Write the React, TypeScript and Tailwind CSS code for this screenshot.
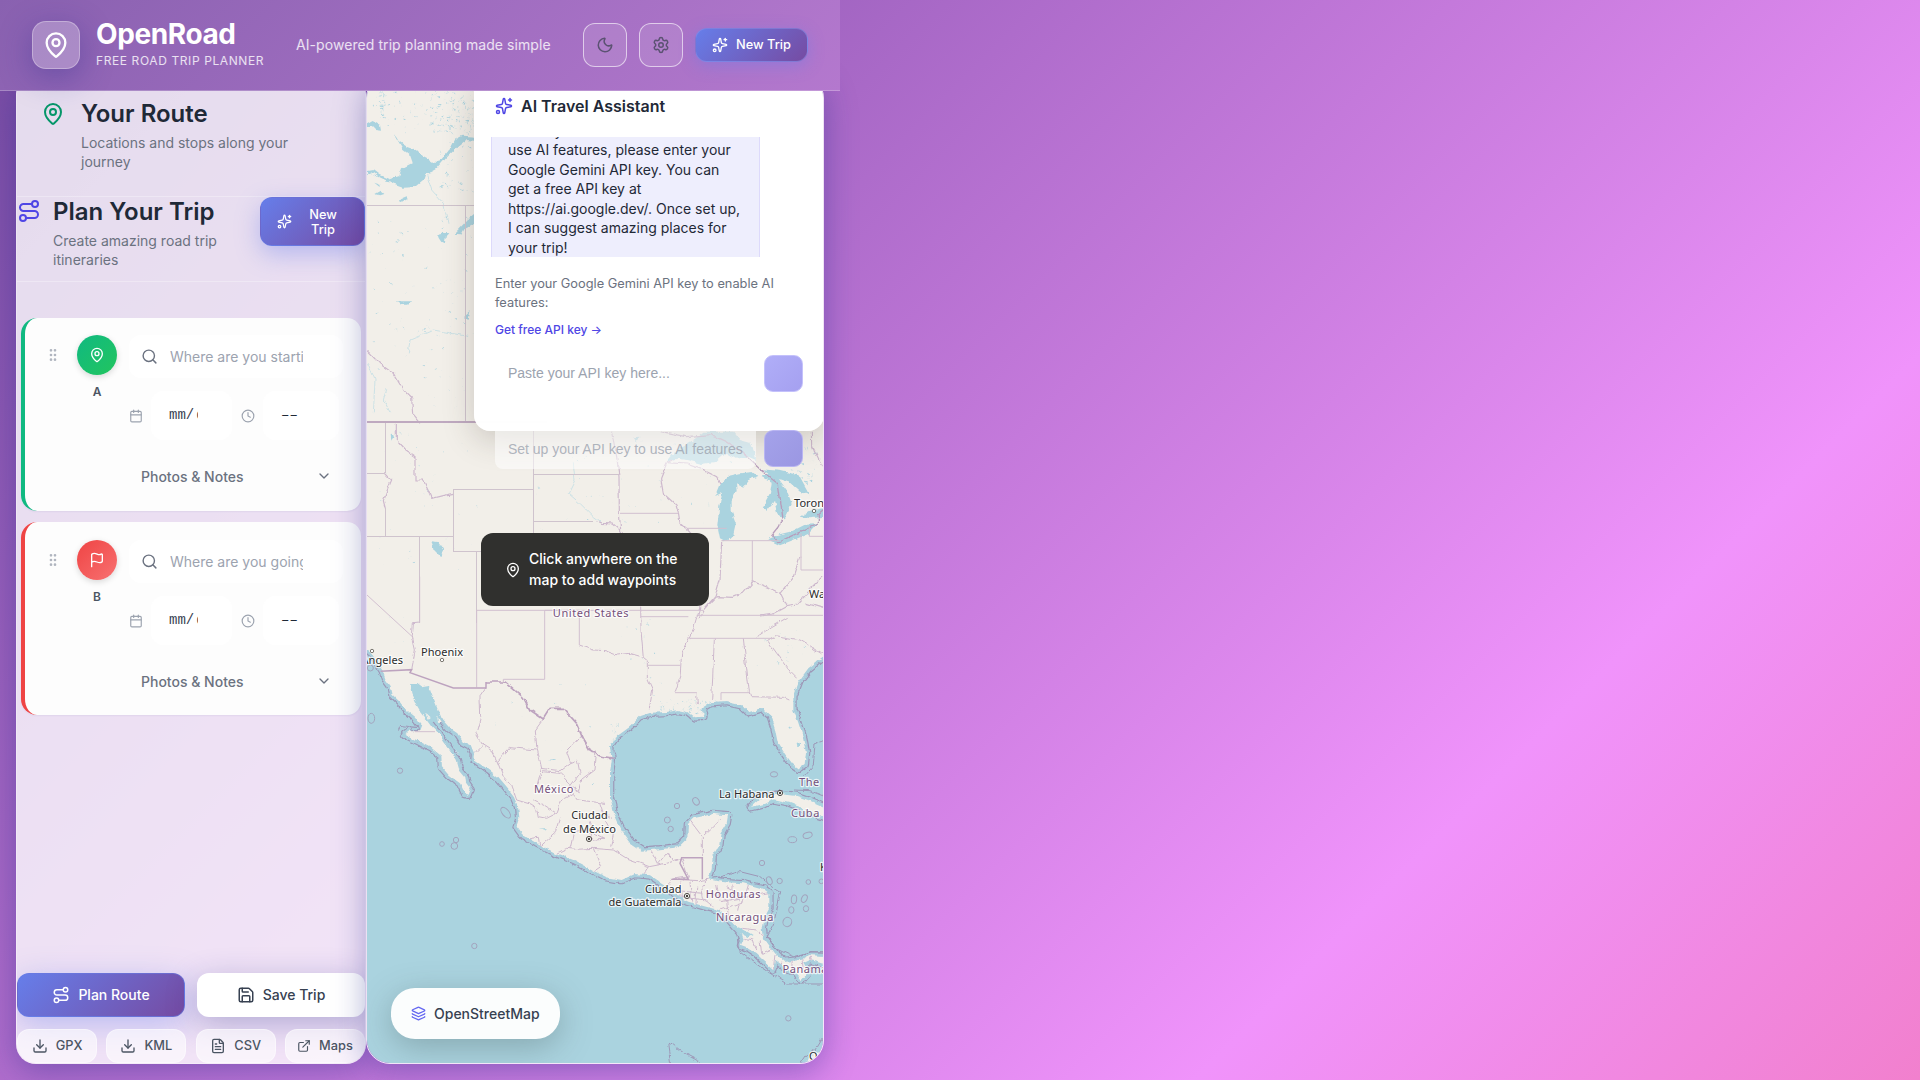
import React from "react";
import {
  Calendar,
  ChevronDown,
  Clock,
  Download,
  ExternalLink,
  FileText,
  Flag,
  GripVertical,
  Layers,
  MapPin,
  Moon,
  Route,
  Save,
  Search,
  Settings,
  Sparkles,
} from "lucide-react";

const LAND =
  "M21,-1700 L21,150 L38,165 L50,185 L68,212 L76,236 L92,258 L98,285 L122,308 L140,332 L164,352 L184,378 L178,394 L150,392 L135,403 L165,418 L212,442 L244,468 L246,502 L266,525 L300,550 L316,582 L326,584 L332,568 L318,548 L316,532 L298,510 L290,482 L270,450 L252,425 L236,400 L218,382 L200,358 L182,335 L168,312 L154,282 L150,252 L172,252 L185,262 L207,258 L217,285 L235,330 L246,358 L270,385 L292,400 L308,425 L332,438 L342,462 L340,478 L358,490 L388,512 L416,535 L444,568 L462,592 L474,620 L478,655 L470,680 L488,705 L530,730 L585,758 L640,780 L700,812 L740,832 L785,840 L825,822 L870,826 L915,855 L946,885 L985,905 L1030,918 L1075,930 L1108,958 L1140,995 L1150,1022 L1143,1038 L1165,1046 L1190,1062 L1215,1085 L1240,1108 L1245,1082 L1270,1100 L1310,1118 L1325,1140 L1345,1118 L1330,1090 L1350,1080 L1372,1085 L1395,1092 V1068 L1350,1066 L1320,1080 L1275,1086 L1245,1060 L1212,1015 L1208,985 L1215,950 L1228,925 L1228,880 L1210,866 L1150,850 L1085,846 L1045,838 L1055,805 L1058,768 L1078,735 L1082,700 L1100,670 L1104,646 L1060,642 L1000,655 L984,672 L982,715 L955,742 L900,748 L848,752 L812,728 L785,690 L762,640 L750,592 L750,520 L755,480 L750,440 L772,408 L810,380 L842,348 L872,338 L920,336 L955,330 L985,336 L1005,352 L1030,350 L1025,325 L1048,310 L1100,306 L1145,316 L1165,336 L1205,324 L1232,348 L1244,385 L1252,425 L1275,462 L1298,492 L1318,506 L1334,495 L1338,460 L1330,415 L1314,365 L1300,330 L1300,285 L1315,245 L1345,205 L1395,165 V-1700 Z";

const CUBA =
  "M1172,622 L1205,592 L1262,582 L1310,588 L1350,602 L1395,622 V652 L1362,640 L1322,622 L1288,608 L1240,598 L1212,612 Z";

const MINOR = [
  "M155,209 L166,150 L157,110 L160,68 L179,66",
  "M378,264 L360,290 L362,350 L348,400 L368,435 L340,462",
  "M550,357 L526,390 L530,440 L545,505 L600,512 L632,488",
  "M368,435 L395,452 L412,485 L450,443 L530,450",
  "M412,485 L430,530 L456,560 L470,600",
  "M665,405 L620,455 L632,488 L652,480 L660,520 L630,560 L655,575 L665,540 L705,510 L708,475 L665,405",
  "M545,505 L530,560 L550,515 L600,520 L632,555",
  "M470,600 L510,612 L530,625 L535,650 L560,655 L590,640 L555,618 L520,600",
  "M590,640 L605,600 L640,580 L655,600 L735,610",
  "M480,720 L535,712 L540,740 L585,700 L600,650",
  "M585,762 L620,745 L650,748 L700,745 L722,800 L700,815",
  "M630,745 L640,700 L680,690 L700,720 L735,718 L700,700 L690,660",
  "M700,745 L760,750 L800,775 L868,800 L850,828",
  "M756,655 L730,640 L720,610",
  "M735,660 L760,705 L752,740",
  "M875,752 L895,790 L920,760 L940,782 L965,776",
  "M965,776 L985,830 L935,838 L920,865",
  "M985,655 L1027,710 V770 M1027,710 L1085,655",
  "M868,800 L920,790 L965,776",
  "M935,838 L1020,842 L1045,838 L1025,860 L1030,895 L1060,920",
  "M960,845 L965,905 M990,845 L995,905 M935,870 L1030,880 M1010,860 L1008,915 M950,890 L1040,900",
  "M1070,855 L1080,905 M1120,852 L1115,900 M1165,855 L1150,905 L1080,930 M1080,905 L1230,878",
  "M1100,860 L1140,880 L1130,935 M1050,880 L1100,900 L1105,950",
  "M1150,985 L1190,990 L1215,1012 M1150,1015 L1180,1020 L1190,1050 M1200,1020 L1205,1060 L1240,1045",
  "M1245,1062 L1240,1108 M1265,1088 L1262,1115 M1300,1070 L1298,1118 M1325,1075 L1330,1110 M1350,1070 L1362,1100",
  "M658,135 L700,150 L735,152 L770,165 L810,160 L850,172",
  "M842,20 L843,90 L850,172 L862,182 L862,235 L878,270 L868,325",
  "M1040,-20 L1020,20 L1000,90 L965,160 L960,230 L945,275",
  "M1225,125 L1265,180 L1290,215 L1310,235 M1225,125 L1250,108 L1320,120 L1386,162",
  "M1190,112 L1235,80 L1283,52",
  "M1010,278 L1012,312 M1063,115 L1055,300 M1150,115 L1168,275 L1172,290 L1270,292 L1288,300",
  "M1310,600 L1318,618 M1340,600 L1342,630 M1365,612 L1372,640 M1290,590 L1288,608",
];

const NORTH = [
  "M109,1030 V1080 L135,1110 L165,1130 L165,1200 L190,1200 L215,1255 L250,1246 L280,1240",
  "M21,812 L60,852 L100,880 L130,930 L155,955 L158,1000 L180,1027",
  "M76,1180 L95,1200 L80,1235 L70,1262 L76,1285",
];

const MIDWEST = [
  "M575,515 L590,590 L597,650 L598,760 L602,810",
  "M530,784 L545,790 L580,792 L602,812 L615,830",
  "M775,760 L768,735 L730,700 L722,655 L740,610 L760,600",
  "M775,760 L780,790 L805,812 L850,860",
  "M740,608 L800,612 L845,628 L890,650 L900,670",
  "M905,842 L900,960 L885,1010 L850,1050 L835,1080",
  "M865,1035 L890,1010 L940,1012 L970,1000 L1000,965 L1050,985 L1080,1000 L1120,950 L1140,890",
  "M1080,1000 L1100,1040 L1130,1035 L1170,990 L1210,950",
  "M1100,1040 L1060,1062 L1020,1068 M1160,1030 L1210,1045",
  "M1177,515 L1178,560 L1210,625",
];

const LAKES = [
  "M740,606 L770,570 L820,540 L850,515 L940,515 L960,540 L990,548 L1005,580 L1008,600 L985,590 L950,596 L920,578 L890,605 L845,612 L800,600 L770,596 Z",
  "M886,705 L900,670 L925,648 L960,640 L1000,636 L1015,648 L985,660 L970,680 L948,670 L950,690 L935,720 L935,755 L948,790 L940,825 L920,845 L900,835 L892,795 L898,740 L906,695 Z",
  "M1020,650 L1050,640 L1075,655 L1100,690 L1115,730 L1095,775 L1075,770 L1062,722 L1040,752 L1025,745 L1050,700 L1055,668 Z",
  "M1025,628 L1080,632 L1135,645 L1160,690 L1168,706 L1140,695 L1110,668 L1060,652 Z",
  "M1042,838 L1070,825 L1110,815 L1150,795 L1195,792 L1170,820 L1120,840 L1080,856 Z",
  "M1142,770 L1170,752 L1212,745 V770 L1170,775 Z",
  "M36,846 L52,852 L70,880 L62,890 L40,868 Z",
  "M640,532 L662,530 L650,546 Z",
];

const CANADA = [
  "M82,128 L92,140 L100,155 L125,172 L150,180 L165,195 L185,205 L200,215 L220,215 L250,180 L265,150 L290,137 L324,140 V152 L300,150 L275,170 L240,205 L210,240 L192,250 L178,252 L172,270 L150,288 L110,290 L80,280 L70,268 L100,258 L108,235 L140,218 L132,195 L112,180 Z",
  "M3,100 L20,90 L45,105 L48,122 L30,120 L18,108 L3,108 Z",
  "M3,243 L20,240 L40,255 L75,270 L80,275 L60,272 L35,260 L20,248 L3,255 Z",
  "M25,278 L45,285 L40,290 Z M25,312 L42,302 L52,312 L40,316 Z M97,332 L122,322 L125,328 L108,338 Z",
  "M324,372 L305,388 L290,405 L262,434 L285,436 L295,418 L324,402 Z",
  "M214,432 L228,428 L250,430 L240,440 L236,458 L226,456 L218,444 Z",
];

const ISLANDS: [number, number, number, number, number][] = [
  [34, 355, 10, 15, 0],
  [120, 512, 8, 8, 0],
  [246, 732, 7, 7, 0],
  [288, 720, 8, 8, 0],
  [283, 738, 10, 10, 0],
  [437, 638, 10, 19, -40],
  [343, 1038, 8, 8, 0],
  [951, 618, 8, 8, 0],
  [1008, 604, 9, 12, -30],
  [922, 660, 9, 9, 0],
  [932, 687, 8, 8, 0],
  [1206, 789, 8, 8, 0],
  [1297, 719, 13, 9, 0],
  [1343, 706, 14, 9, -15],
  [1242, 523, 11, 8, 0],
  [1302, 898, 8, 13, 5],
  [1333, 896, 8, 12, 25],
  [1294, 930, 8, 10, 0],
  [1338, 926, 8, 9, 0],
  [1282, 966, 13, 14, 20],
  [1259, 843, 8, 8, 0],
  [1345, 846, 7, 7, 0],
  [1384, 844, 7, 7, 0],
  [1285, 1255, 8, 8, 0],
  [1228, 842, 8, 12, -20],
  [31, 204, 9, 9, 0],
];

function specks(count: number, seed: number, x: number, y: number, w: number, h: number, size: number) {
  let s = seed;
  const rnd = () => {
    s = (s * 16807) % 2147483647;
    return s / 2147483647;
  };
  rnd();
  rnd();
  let d = "";
  for (let i = 0; i < count; i++) {
    const px = x + rnd() * w;
    const py = y + rnd() * h;
    const a = (rnd() - 0.3) * size;
    const b = (rnd() - 0.6) * size;
    d += `M${px.toFixed(1)},${py.toFixed(1)}l${a.toFixed(1)},${b.toFixed(1)}l${(b / 2).toFixed(1)},${(a / 2 + 1).toFixed(1)}z`;
  }
  return d;
}

function Label({ x, y, children, country, anchor = "middle" }: { x: number; y: number; children: string; country?: boolean; anchor?: "start" | "middle" | "end" }) {
  return (
    <text
      x={x}
      y={y}
      textAnchor={anchor}
      fontSize="11"
      letterSpacing={country ? 0.55 : 0.05}
      fill={country ? "#75507b" : "#2b2b2b"}
      stroke="#ffffff"
      strokeOpacity="0.75"
      strokeWidth="2.4"
      strokeLinejoin="round"
      paintOrder="stroke"
    >
      {children}
    </text>
  );
}

function Capital({ x, y }: { x: number; y: number }) {
  return (
    <g>
      <circle cx={x} cy={y} r="2.6" fill="#fff" stroke="#3f3b36" strokeWidth="0.9" />
      <circle cx={x} cy={y} r="1.2" fill="#3f3b36" />
    </g>
  );
}

function MapCanvas() {
  return (
    <svg viewBox="367 75 456 988" className="block h-full w-full font-['Noto_Sans',sans-serif]" preserveAspectRatio="none">
      <defs>
        <filter id="rough" x="-5%" y="-5%" width="110%" height="110%">
          <feTurbulence type="fractalNoise" baseFrequency="0.12" numOctaves="3" seed="4" />
          <feDisplacementMap in="SourceGraphic" scale="5" xChannelSelector="R" yChannelSelector="G" />
        </filter>
        <clipPath id="landclip">
          <path d={LAND} />
        </clipPath>
      </defs>
      <rect x="367" y="75" width="456" height="988" fill="#aad3df" />
      <g filter="url(#rough)">
        <g transform="translate(360 600) scale(0.33333)" strokeLinejoin="round">
          <path d={LAND} fill="none" stroke="#9d97b7" strokeWidth="26" />
          <path d={CUBA} fill="none" stroke="#9d97b7" strokeWidth="26" />
          <path d={LAND} fill="none" stroke="#a9cfdd" strokeWidth="19" />
          <path d={CUBA} fill="none" stroke="#aad3df" strokeWidth="19" />
          <path d="M150,252 L172,252 L185,262 L207,258 L217,285 L235,330 L240,360 L205,370 L182,335 L168,312 L154,282 Z" fill="#aad3df" />
          <path d={LAND} fill="#f2efe9" />
          <path d="M-60,-1700 H60 V140 H-60 Z M1380,-1700 H1460 V150 H1380 Z" fill="#f2efe9" />
          <path d={CUBA} fill="#f2efe9" />
          <path d="M115,392 L122,376 L150,380 L158,392 L176,392 L172,380" fill="none" stroke="#9d97b7" strokeWidth="3" />
          <path d="M232,350 L240,362 L234,372 Z M198,338 L212,352 L206,356 Z M290,455 L284,440 L298,470 Z" fill="#f2efe9" />
          <g fill="none" stroke="#cdb8cd" strokeWidth="3" clipPath="url(#landclip)">
            {MINOR.map((d) => (
              <path key={d} d={d} />
            ))}
          </g>
          <path d="M378,246 H435 L490,292 L510,330 L550,357 L570,325 L610,325 L650,370 L670,415 L690,450 L720,468 L762,475" fill="none" stroke="#bda3bf" strokeWidth="5" />
          <path d="M1060,835 L1140,815 L1200,830 L1240,862 L1262,875 L1240,975 L1222,1010 L1245,1045 L1300,1070 L1350,1056 L1395,1055 M1132,1010 L1135,1050 L1200,1100 L1280,1152 H1395" fill="none" stroke="#9d97b7" strokeWidth="3" />
          <path d="M1395,420 L1365,432 L1360,495 L1330,530 M1300,570 L1350,572 L1395,590 M932,1395 L924,1340 L930,1327 L975,1362 L1010,1380 L1020,1395 M1395,1300 L1365,1350 L1340,1365 L1320,1395" fill="none" stroke="#9d97b7" strokeWidth="3" />
          <path d="M1395,1330 L1380,1355 L1350,1365 L1338,1395 H1395 Z" fill="#f2efe9" />
          <path d="M1120,975 L1145,985 L1178,1005 L1165,1012 L1140,1000 Z M1310,432 l10,-4 l0,12 l-8,2 z M540,686 l24,-2 l-6,5 z M560,477 l30,0 l-8,3 z M1285,375 l8,5 l-4,4z M700,545 l2,10 l-3,0z" fill="#aad3df" />
          <path d={specks(70, 9177, 900, 300, 170, 40, 14)} fill="#aad3df" />
          <path d={specks(30, 3155, 750, 370, 20, 90, 12)} fill="#aad3df" />
          <path d={specks(22, 77123, 780, 60, 120, 240, 10)} fill="#aad3df" />
          <path d={specks(24, 17231, 1180, 90, 160, 120, 8)} fill="#aad3df" />
          <path d={specks(10, 27453, 400, 250, 300, 200, 10)} fill="#aad3df" />
          <path d={specks(10, 55342, 40, 20, 90, 180, 8)} fill="#aad3df" />
        </g>
        <g transform="translate(360 80) scale(0.33333)" fill="none" stroke="#cdb8cd" strokeWidth="3.5">
          {NORTH.map((d) => (
            <path key={d} d={d} />
          ))}
          <path d="M25,850 L45,900 L40,1000 M80,925 L70,960 L90,1000 M200,285 L215,330 L250,370 L268,430 M145,820 L150,780 L220,750 L330,770 M640,1150 L645,1200 L625,1240 L660,1270 L700,1310 L720,1325" stroke="#c4dfe4" strokeWidth="2.5" />
          <path d={specks(80, 12345, 30, 400, 310, 500, 12)} fill="#aad3df" stroke="none" />
          <path d={specks(40, 42311, 30, 1050, 320, 420, 8)} fill="#aad3df" stroke="none" />
          <path d="M108,664 h45 l-8,10 h-25z M308,715 l24,-22 l-6,26z M214,1384 l20,2 l16,24 l-8,12 l-20,-14z M92,1060 l10,8 l-8,14z" fill="#aad3df" stroke="none" />
        </g>
        <g transform="translate(366 90) scale(0.33333)" fill="#aad3df">
          {CANADA.map((d) => (
            <path key={d} d={d} />
          ))}
          <path d={specks(150, 71311, 190, -40, 134, 170, 16)} />
          <path d={specks(60, 31339, 20, -40, 170, 170, 12)} />
          <path d={specks(36, 81355, 220, 150, 104, 160, 14)} />
          <path d={specks(34, 80321, 40, 2, 14, 90, 14)} />
        </g>
        <g transform="translate(420 260) scale(0.33333)">
          {LAKES.map((d) => (
            <path key={d} d={d} fill="#aad3df" />
          ))}
          <path d={specks(50, 61143, 340, 530, 600, 300, 9)} fill="#aad3df" />
          <path d={specks(30, 99231, 1090, 560, 118, 110, 16)} fill="#aad3df" />
          <path d={specks(30, 44567, 0, 40, 160, 420, 10)} fill="#aad3df" />
          <g fill="none" stroke="#cdb8cd" strokeWidth="3.5">
            {MIDWEST.map((d) => (
              <path key={d} d={d} />
            ))}
          </g>
          <path d="M725,515 L800,530 L875,524 L920,545 L960,570 L985,595 L1020,628 L1040,645 L1075,672 L1088,770 L1075,800 L1055,825 L1075,846 L1110,830 L1150,812 L1195,792 L1195,765 L1212,750" fill="none" stroke="#b79dbb" strokeWidth="4" />
        </g>
      </g>
      <g transform="translate(360 80) scale(0.33333)" fill="none" stroke="#cfc3cd" strokeWidth="3" shapeRendering="crispEdges">
        <path d="M21,376 H350 M317,376 V1027 M76,1027 V1180 H21 M76,1285 V1368 M21,1369 H280 M280,1228 H520 V1414 H280 Z M520,1050 V1370 M179,1369 V1628 M349,1414 V1628 M520,1184 H776 M520,1324 H700" />
        <path d="M21,1027 H560" stroke="#bfa9c0" strokeWidth="5" />
      </g>
      <g transform="translate(420 260) scale(0.33333)" fill="none" stroke="#d2c0d0" strokeWidth="3">
        <path d="M600,760 H775 M800,805 H920 M905,842 H1078 M997,842 V970 M1143,820 V930 H1212 M1168,800 V829 H1212 M170,1051 H850" />
      </g>
      <g transform="translate(360 600) scale(0.33333)" fill="none" stroke="#d2c0d0" strokeWidth="3">
        <path d="M21,-15 L157,110 M179,-70 V68 M350,31 V262 M554,31 V238 H430 V246 M658,31 V135 M554,31 H660 M842,50 H985 M1010,46 H1395 M862,196 H960 M990,115 H1245 M945,278 H1010 M1083,300 V278 H1170 M165,395 H225" />
        <path d="M62,214 L155,209 L150,218 L280,264 H378 V246 M935,838 H985 L960,790 L965,773 H1027 V838" stroke="#bda3bf" strokeWidth="4.5" />
        <g stroke="#a3a3bd">
          {ISLANDS.map(([cx, cy, rx, ry, r]) => (
            <ellipse key={`${cx}-${cy}`} cx={cx} cy={cy} rx={rx} ry={ry} transform={`rotate(${r} ${cx} ${cy})`} />
          ))}
        </g>
      </g>
      <g fill="#fff" stroke="#5c5850" strokeWidth="0.8">
        <circle cx="372" cy="651" r="1.7" />
        <circle cx="442" cy="660" r="1.7" />
        <circle cx="814" cy="511" r="1.7" />
      </g>
      <Capital x={589} y={839} />
      <Capital x={780} y={793} />
      <Capital x={687} y={896} />
      <Label x={403} y={664} anchor="end">Los Angeles</Label>
      <Label x={442} y={656}>Phoenix</Label>
      <Label x={591} y={617} country>United States</Label>
      <Label x={794} y={507} anchor="start">Toronto</Label>
      <Label x={809} y={598} anchor="start">Washington</Label>
      <Label x={554} y={792.5} country>México</Label>
      <Label x={589.5} y={819}>Ciudad</Label>
      <Label x={589.5} y={832.5}>de México</Label>
      <Label x={774.5} y={797.5} anchor="end">La Habana</Label>
      <Label x={799} y={785.5} country anchor="start">The Bahamas</Label>
      <Label x={791} y={817} country anchor="start">Cuba</Label>
      <Label x={681.5} y={893} anchor="end">Ciudad</Label>
      <Label x={681.5} y={906} anchor="end">de Guatemala</Label>
      <Label x={733.5} y={897.5} country>Honduras</Label>
      <Label x={745} y={920.5} country>Nicaragua</Label>
      <Label x={782.5} y={972.5} country anchor="start">Panamá</Label>
      <Label x={820} y={870.5} anchor="start">Kingston</Label>
      <Label x={809} y={1060} anchor="start">Quito</Label>
    </svg>
  );
}

function Header() {
  return (
    <header className="relative z-20 flex h-[91px] w-[840px] shrink-0 items-start border-b border-white/25 bg-[linear-gradient(135deg,#8961b0_0%,#b478ce_100%)] pl-8">
      <div className="mt-[21px] flex size-12 items-center justify-center rounded-[14px] border border-white/30 bg-white/25 text-white shadow-[0_8px_32px_rgba(31,38,135,0.35)]">
        <MapPin size={28} />
      </div>
      <div className="ml-4 mt-[17px] w-[200px]">
        <h1 className="text-[28px] leading-[34px] font-bold tracking-[-0.4px] text-white">OpenRoad</h1>
        <p className="mt-px text-[12px] leading-[17px] tracking-[0.6px] whitespace-nowrap text-white/80">FREE ROAD TRIP PLANNER</p>
      </div>
      <p className="mt-[35px] w-[287px] text-[14px] leading-5 tracking-[0.07px] whitespace-nowrap text-white/80">AI-powered trip planning made simple</p>
      <div className="mt-[23px] flex items-start gap-3 text-[#5b5272]">
        <button className="flex size-11 items-center justify-center rounded-xl border border-white/60 bg-white/10">
          <Moon size={18} />
        </button>
        <button className="flex size-11 items-center justify-center rounded-xl border border-white/60 bg-white/10">
          <Settings size={18} />
        </button>
        <button className="mt-[5px] flex h-[34px] w-[113px] items-center justify-center gap-2 rounded-xl border border-[#8a8ee8]/60 bg-[linear-gradient(135deg,#667eea,#764ba2)] text-[12.8px] font-medium text-white shadow-[0_4px_16px_rgba(102,126,234,0.4)]">
          <Sparkles size={16} />
          New Trip
        </button>
      </div>
    </header>
  );
}

function StopCard({ letter, placeholder, tone }: { letter: string; placeholder: string; tone: "start" | "end" }) {
  const start = tone === "start";
  return (
    <section className={`flex h-[193px] w-[340px] rounded-[16px_14px_14px_16px] border-l-4 bg-[#fdfdfd] shadow-[0_1px_2px_rgba(31,38,135,0.06)] ${start ? "border-[#10b981] pt-[17px]" : "border-[#ef4444] pt-[18px]"}`}>
      <div className="ml-5 flex h-10 w-4 items-center text-[#9ca3af]/80">
        <GripVertical size={16} />
      </div>
      <div className="ml-4 flex w-10 flex-col items-center">
        <div className={`flex size-10 items-center justify-center rounded-full text-white shadow-[0_2px_6px_rgba(0,0,0,0.15)] ${start ? "bg-[linear-gradient(135deg,#10b981,#22c55e)]" : "bg-[linear-gradient(135deg,#ef4444,#f87171)]"}`}>
          {start ? <MapPin size={16} /> : <Flag size={16} />}
        </div>
        <span className="mt-2 text-[12px] leading-[18px] font-semibold text-[#4b5563]">{letter}</span>
      </div>
      <div className="ml-3 w-[214px]">
        <div className="flex h-[43px] items-center rounded-xl bg-white pl-[12px] text-[#6b7280]">
          <Search size={17} />
          <div className="ml-[12px] w-[133px] overflow-hidden text-[14px] whitespace-nowrap text-[#9ca3af]">{placeholder}</div>
        </div>
        <div className="mt-[13px] flex h-[49px] items-center text-[#9ca3af]">
          <Calendar size={14} />
          <div className="ml-2 flex h-full w-[81px] items-center rounded-xl bg-white pl-[18px] text-[#374151]">
            <span className="w-[29px] overflow-hidden font-['Liberation_Mono',monospace] text-[14px] whitespace-nowrap">
              mm/<span className="ml-[2px]">dd</span>
            </span>
          </div>
          <Clock size={14} className="ml-[9px]" />
          <div className="ml-2 flex h-full w-[76px] items-center rounded-xl bg-white pl-[18px] text-[#1f2937]">
            <span className="font-['Liberation_Mono',monospace] text-[14px]">––</span>
          </div>
        </div>
        <div className="mt-[26px] flex h-5 w-[205px] items-center justify-between pl-[12px] text-[14px] font-medium text-[#6b7280]">
          <span>Photos &amp; Notes</span>
          <ChevronDown size={16} className="mr-[2px]" />
        </div>
      </div>
    </section>
  );
}

function Sidebar() {
  return (
    <aside className="flex h-[990px] w-[350px] shrink-0 flex-col overflow-hidden rounded-[20px] border border-white/30 bg-white/80">
      <div className="flex h-[122px] border-b border-white/30 pt-[27px] pl-6">
        <MapPin size={24} className="text-[#059669]" />
        <div className="-mt-[4px] ml-[16px] w-[230px]">
          <h2 className="text-[24px] leading-[31px] font-semibold text-[#1f2937]">Your Route</h2>
          <p className="mt-[4px] text-[14px] leading-[19px] text-[#6b7280]">Locations and stops along your journey</p>
        </div>
      </div>
      <div className="flex h-[85px] border-b border-white/30">
        <Route size={24} className="mt-[2px] text-[#4f46e5]" />
        <div className="-mt-px ml-[12px] w-[207px]">
          <h2 className="text-[24px] leading-[31px] font-semibold text-[#1f2937]">Plan Your Trip</h2>
          <p className="mt-[4px] w-[170px] text-[14px] leading-[19px] text-[#6b7280]">Create amazing road trip itineraries</p>
        </div>
        <button className="flex h-[49px] w-[105px] items-center rounded-xl border border-[#667eea]/50 bg-[linear-gradient(135deg,#667eea,#764ba2)] pl-[16px] text-[12.8px] leading-[15px] font-medium text-white shadow-[0_8px_24px_rgba(102,126,234,0.4)]">
          <Sparkles size={15} />
          <span className="ml-[15px] w-8 text-center">New Trip</span>
        </button>
      </div>
      <div className="mt-[36px] flex flex-col gap-[11px] pl-[4px]">
        <StopCard letter="A" placeholder="Where are you starting from?" tone="start" />
        <StopCard letter="B" placeholder="Where are you going?" tone="end" />
      </div>
      <div className="mt-auto flex gap-3 text-[14px] font-medium">
        <button className="flex h-11 w-[168px] items-center justify-center gap-2 rounded-xl border border-[#667eea]/60 bg-[linear-gradient(135deg,#667eea,#764ba2)] pb-px text-white shadow-[0_8px_32px_rgba(102,126,234,0.4)]">
          <Route size={18} />
          Plan Route
        </button>
        <button className="flex h-11 w-[168px] items-center justify-center gap-2 rounded-xl bg-white pb-px text-[#374151] shadow-[0_8px_32px_rgba(31,38,135,0.3)]">
          <Save size={18} />
          Save Trip
        </button>
      </div>
      <div className="mt-3 flex justify-between text-[12.8px] font-medium text-[#4b5563]">
        {[
          { name: "GPX", Icon: Download },
          { name: "KML", Icon: Download },
          { name: "CSV", Icon: FileText },
          { name: "Maps", Icon: ExternalLink },
        ].map(({ name, Icon }) => (
          <button key={name} className="flex h-[34px] w-[80px] items-center justify-center gap-2 rounded-xl border border-white/40 bg-white/60">
            <Icon size={name === "Maps" ? 14 : 16} />
            {name}
          </button>
        ))}
      </div>
    </aside>
  );
}

function Assistant() {
  return (
    <div className="absolute top-0 -right-px h-[356px] w-[350px] rounded-[16px] bg-white/[0.985] pt-[21px] pl-[21px] shadow-[0_8px_32px_rgba(60,50,40,0.22)]">
      <h3 className="flex items-center gap-2 text-[16px] leading-5 font-semibold text-[#1f2937]">
        <Sparkles size={18} className="text-[#4f46e5]" />
        AI Travel Assistant
      </h3>
      <div className="mt-[21px] -ml-1 flex h-[120px] w-[269px] items-end overflow-hidden border-x border-[#dddafb] bg-[#eeeefd] pl-4 text-[14px] leading-[19.5px] text-[#1f2937]">
        <div className="whitespace-nowrap">
          <div>itinerary! To</div>
          <div>use AI features, please enter your</div>
          <div>Google Gemini API key. You can</div>
          <div>get a free API key at</div>
          <div>https://ai.google.dev/. Once set up,</div>
          <div>I can suggest amazing places for</div>
          <div>your trip!</div>
        </div>
      </div>
      <p className="mt-[17px] w-[300px] text-[12.8px] leading-[19px] text-[#6b7280]">Enter your Google Gemini API key to enable AI features:</p>
      <p className="mt-[9px] text-[12px] leading-[18px] font-medium text-[#4f46e5]">Get free API key →</p>
      <div className="mt-[16px] flex items-center">
        <div className="w-[269px] pl-[13px] font-['Liberation_Sans',sans-serif] text-[14px] text-[#9ca3af]">Paste your API key here...</div>
        <div className="h-[37px] w-[39px] rounded-[9px] border border-[#c4c1fb] bg-[linear-gradient(135deg,#b0aef8,#a5a0f0)]" />
      </div>
      <div className="mt-[38px] flex items-start">
        <div className="flex h-[39px] w-[261px] items-center rounded-b-[8px] bg-white/55 pb-px pl-[13px] font-['Liberation_Sans',sans-serif] text-[14px] tracking-[-0.03px] whitespace-nowrap text-[#9ca3af]/80">
          Set up your API key to use AI features
        </div>
        <div className="ml-2 h-[37px] w-[39px] rounded-[9px] border border-[#b9b5f2] bg-[linear-gradient(135deg,#a4a2ea,#9b97e2)]" />
      </div>
    </div>
  );
}

export default function App() {
  return (
    <div className="flex h-[1080px] w-[1920px] flex-col overflow-hidden bg-[linear-gradient(135deg,#764ba2_0px,#f093fb_1609px,#f5576c_3219px)] font-['Inter',sans-serif]">
      <Header />
      <main className="-mt-[17px] flex pl-4">
        <div className="rounded-[20px] shadow-[0_8px_32px_rgba(31,38,135,0.37)]">
          <Sidebar />
        </div>
        <div className="relative h-[990px] w-[458px] shrink-0 overflow-hidden rounded-[24px] border border-white/80 shadow-[0_8px_32px_rgba(31,38,135,0.37)]">
          <MapCanvas />
          <Assistant />
          <div className="absolute top-[458px] left-[114px] flex h-[73px] w-[228px] items-center rounded-xl bg-[#30302e] pl-[24px] text-[14px] leading-[21px] font-medium text-white">
            <MapPin size={16} />
            <span className="-mt-[2px] ml-[8px] w-[160px]">Click anywhere on the map to add waypoints</span>
          </div>
          <button className="absolute bottom-[24px] left-[24px] flex h-[51px] w-[169px] items-center rounded-[24px] bg-[#fbfdfd] pl-[20px] text-[14px] font-medium text-[#374151] shadow-[0_8px_32px_rgba(70,90,90,0.35)]">
            <Layers size={15} className="mr-[8px] text-[#6366f1]" />
            OpenStreetMap
          </button>
        </div>
      </main>
    </div>
  );
}
